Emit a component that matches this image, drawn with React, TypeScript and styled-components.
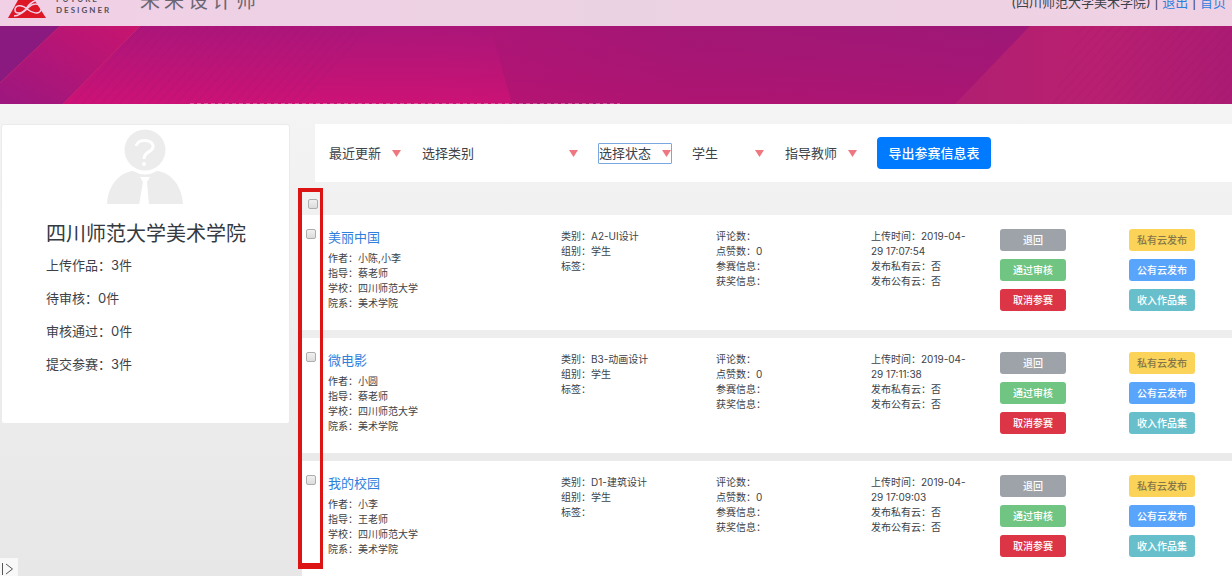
import React from "react";
import styled, { createGlobalStyle } from "styled-components";

const GlobalStyle = createGlobalStyle`
  *, *::before, *::after { box-sizing: border-box; }
  body {
    margin: 0;
    color: #3c4248;
    font-family: Inter, "Noto Sans CJK SC", sans-serif;
    font-size: 13px;
  }
  button, select, input { font: inherit; color: inherit; margin: 0; }
  h1, h2, h3, p, ul { margin: 0; padding: 0; font-weight: 400; }
  ul { list-style: none; }
`;

const Page = styled.div`
  min-height: 100vh;
  background: linear-gradient(#f4f4f4 100px, #e7e7e7 576px);
`;

const Header = styled.header`
  display: flex;
  align-items: flex-end;
  justify-content: space-between;
  height: 26px;
  padding: 0 6px 8px 8px;
  overflow: hidden;
  background: linear-gradient(90deg, #f1d0e6, #ebd2e2 50%, #f0d1e4);
`;

const Brand = styled.div`
  display: flex;
  align-items: flex-end;
`;

const BrandName = styled.div`
  width: 84px;
  margin-left: 10px;
  padding-bottom: 2px;
  color: #55505a;
  font-family: Lato, sans-serif;
  font-size: 8px;
  font-weight: 700;
  line-height: 11px;
  letter-spacing: 2px;
`;

const SiteTitle = styled.h1`
  padding-bottom: 5px;
  color: #6c6673;
  font-size: 20px;
  line-height: 24px;
  letter-spacing: 4px;
`;

const Account = styled.nav`
  padding-bottom: 6px;
  line-height: 20px;
  white-space: nowrap;
`;

const Link = styled.a`
  color: #2f80dd;
  text-decoration: none;
`;

const Banner = styled.svg`
  display: block;
  width: 100%;
  height: 78px;
`;

const Content = styled.div`
  display: grid;
  grid-template-columns: 289px minmax(0, 1fr);
  align-items: start;
  gap: 12px;
  padding: 20px 0 0 1px;
`;

const ProfileCard = styled.aside`
  display: flex;
  flex-direction: column;
  min-height: 300px;
  padding: 4px 44px 16px;
  background: #fff;
  border: 1px solid #ebebeb;
  border-radius: 3px;
`;

const Avatar = styled.svg`
  width: 78px;
  height: 76px;
  align-self: center;
`;

const ProfileName = styled.h2`
  margin: 15px 0 0;
  color: #343a40;
  font-size: 20px;
  line-height: 29px;
  white-space: nowrap;
`;

const Stat = styled.li`
  line-height: 33px;
`;

const Main = styled.main`
  position: relative;
`;

const FilterBar = styled.form`
  display: flex;
  align-items: center;
  gap: 19px;
  height: 58px;
  margin-left: 13px;
  padding-left: 13px;
  background: #fff;
`;

const SelectBox = styled.label<{ $wide?: boolean; $active?: boolean }>`
  display: flex;
  align-items: center;
  width: ${(p) => (p.$wide ? 158 : 74)}px;
  height: 21px;
  outline: ${(p) => (p.$active ? "1px solid #7ba7e0" : "none")};
  outline-offset: -1px;
  border-radius: 1px;
`;

const Select = styled.select`
  flex: 1;
  min-width: 0;
  height: 21px;
  padding: 0 0 0 1px;
  border: 0;
  outline: 0;
  background: none;
  appearance: none;
`;

const Arrow = styled.svg`
  flex: none;
  width: 9px;
  height: 7px;
  margin-right: 1px;
`;

const ExportButton = styled.button`
  width: 114px;
  height: 32px;
  padding: 0 0 2px;
  border: 0;
  border-radius: 4px;
  background: #007bff;
  color: #fff;
  font-weight: 500;
  white-space: nowrap;
`;

const SelectAll = styled.div`
  display: flex;
  align-items: center;
  height: 33px;
  padding: 11px 0 0 6px;
`;

const CheckBox = styled.input`
  display: block;
  width: 10px;
  height: 10px;
  border: 1px solid #adadad;
  border-radius: 2px;
  background: linear-gradient(#f0f0f0, #dcdcdc);
  appearance: none;
  &:checked { background: #5a8fd8; }
`;

const List = styled.ul`
  display: grid;
  gap: 8px;
`;

const Row = styled.li`
  display: grid;
  grid-template-columns: 26px 233fr 155fr 155fr 129fr 129fr 103fr;
  min-height: 115px;
  padding-top: 14px;
  background: #fff;
`;

const CheckCell = styled.div`
  padding-left: 4px;
`;

const WorkTitle = styled.h3`
  margin: -2px 0 4px;
  font-size: 13px;
  line-height: 20px;
`;

const Lines = styled.div`
  padding-right: 26px;
  font-size: 10px;
  line-height: 15px;
`;

const Actions = styled.div`
  display: flex;
  flex-direction: column;
  gap: 8px;
`;

const ActionButton = styled.button<{ $bg: string; $ink?: string }>`
  width: 66px;
  height: 22px;
  padding: 0;
  border: 0;
  border-radius: 3px;
  background: ${(p) => p.$bg};
  color: ${(p) => p.$ink ?? "#fff"};
  font-size: 10px;
  font-weight: 500;
  line-height: 22px;
`;

const Highlight = styled.div`
  position: absolute;
  top: 64px;
  bottom: 7px;
  left: -4px;
  width: 25px;
  border: solid #dd1414;
  border-width: 4px 3px 6px 4px;
  pointer-events: none;
`;

const PanelToggle = styled.button`
  position: fixed;
  bottom: 0;
  left: 0;
  display: flex;
  align-items: flex-end;
  width: 18px;
  height: 18px;
  padding: 0;
  border: 0;
  background: #f8f8f8;
`;

const filters = [
  { name: "排序", value: "最近更新" },
  { name: "类别", value: "选择类别", wide: true },
  { name: "状态", value: "选择状态", active: true },
  { name: "组别", value: "学生" },
  { name: "教师", value: "指导教师" },
];

const stats = ["上传作品：3件", "待审核：0件", "审核通过：0件", "提交参赛：3件"];

const works = [
  { title: "美丽中国", author: "小陈,小李", tutor: "蔡老师", category: "A2-UI设计", time: "2019-04-29 17:07:54" },
  { title: "微电影", author: "小圆", tutor: "蔡老师", category: "B3-动画设计", time: "2019-04-29 17:11:38" },
  { title: "我的校园", author: "小李", tutor: "王老师", category: "D1-建筑设计", time: "2019-04-29 17:09:03" },
];

function Logo() {
  return (
    <svg width="38" height="30" viewBox="0 0 38 30" aria-hidden="true">
      <path d="M0 30 L14 5 Q18 -1 22 5 L38 30 Z" fill="#dd1726" />
      <path
        d="M6 28 C12 28 17 23 21 19 C26 14 35 16 33 22 C31 27 24 25 19 21 C14 16 7 17 7 22 C7 26 13 26 17 22 C20 18 23 13 30 12"
        fill="none"
        stroke="#f1d0e6"
        strokeWidth="1.5"
      />
    </svg>
  );
}

function BannerArt() {
  return (
    <Banner viewBox="0 0 1232 78" preserveAspectRatio="none" aria-hidden="true">
      <defs>
        <linearGradient id="base">
          <stop offset="0" stopColor="#bd1379" />
          <stop offset="0.35" stopColor="#b91475" />
          <stop offset="0.55" stopColor="#a81672" />
          <stop offset="0.85" stopColor="#a01876" />
        </linearGradient>
        <linearGradient id="glow" x1="0" y1="0" x2="0" y2="1">
          <stop offset="0" stopColor="#a3177b" stopOpacity="0.6" />
          <stop offset="1" stopColor="#d51175" stopOpacity="0.7" />
        </linearGradient>
        <linearGradient id="soft" x1="0" y1="0" x2="0" y2="1">
          <stop offset="0" stopColor="#99187a" stopOpacity="0.3" />
          <stop offset="1" stopColor="#b61270" stopOpacity="0.5" />
        </linearGradient>
        <linearGradient id="band" x1="1" y1="0" x2="0" y2="1">
          <stop offset="0" stopColor="#c8146f" />
          <stop offset="1" stopColor="#9c177f" />
        </linearGradient>
        <linearGradient id="right">
          <stop offset="0" stopColor="#b01f72" />
          <stop offset="0.5" stopColor="#ba1f6f" />
          <stop offset="1" stopColor="#ab1b73" />
        </linearGradient>
        <pattern id="stripes" width="7" height="7" patternUnits="userSpaceOnUse" patternTransform="rotate(42)">
          <rect width="2" height="7" fill="#8c1078" opacity="0.1" />
        </pattern>
      </defs>
      <rect width="1232" height="78" fill="url(#base)" />
      <path d="M140 0 H490 L512 78 H63 Z" fill="url(#glow)" />
      <path d="M490 0 H1030 L955 78 H512 Z" fill="url(#soft)" />
      <path d="M140 0 H372 L305 78 H63 Z" fill="url(#stripes)" />
      <path d="M60 0 H140 L63 78 H0 V57 Z" fill="url(#band)" />
      <path d="M0 0 H60 L0 57 Z" fill="#8b1a80" />
      <path d="M1030 0 H1232 V78 H955 Z" fill="url(#right)" />
      <path d="M1080 0 H1232 V78 H1052 Z" fill="url(#stripes)" />
      <path d="M60 0 L0 57 M140 0 L63 78" stroke="#dc3560" strokeOpacity="0.45" />
      <path d="M190 77.500 H620" stroke="#f3b6dc" strokeOpacity="0.4" strokeDasharray="4 3" />
    </Banner>
  );
}

function WorkRow({ work }: { work: (typeof works)[number] }) {
  return (
    <Row>
      <CheckCell>
        <CheckBox type="checkbox" aria-label={work.title} />
      </CheckCell>
      <Lines>
        <WorkTitle>
          <Link href="#work">{work.title}</Link>
        </WorkTitle>
        <p>{`作者：${work.author}`}</p>
        <p>{`指导：${work.tutor}`}</p>
        <p>学校：四川师范大学</p>
        <p>院系：美术学院</p>
      </Lines>
      <Lines>
        <p>{`类别：${work.category}`}</p>
        <p>组别：学生</p>
        <p>标签：</p>
      </Lines>
      <Lines>
        <p>评论数：</p>
        <p>点赞数：0</p>
        <p>参赛信息：</p>
        <p>获奖信息：</p>
      </Lines>
      <Lines>
        <p>{`上传时间：${work.time}`}</p>
        <p>发布私有云：否</p>
        <p>发布公有云：否</p>
      </Lines>
      <Actions>
        <ActionButton type="button" $bg="#9da3a9">退回</ActionButton>
        <ActionButton type="button" $bg="#70c583">通过审核</ActionButton>
        <ActionButton type="button" $bg="#dc3545">取消参赛</ActionButton>
      </Actions>
      <Actions>
        <ActionButton type="button" $bg="#fad358" $ink="#85754a">私有云发布</ActionButton>
        <ActionButton type="button" $bg="#59a5fb">公有云发布</ActionButton>
        <ActionButton type="button" $bg="#68bfcc">收入作品集</ActionButton>
      </Actions>
    </Row>
  );
}

export default function App() {
  return (
    <Page>
      <GlobalStyle />
      <Header>
        <Brand>
          <Logo />
          <BrandName>
            FUTURE
            <br />
            DESIGNER
          </BrandName>
          <SiteTitle>未来设计师</SiteTitle>
        </Brand>
        <Account>
          (四川师范大学美术学院) | <Link href="#logout">退出</Link> | <Link href="#home">首页</Link>
        </Account>
      </Header>
      <BannerArt />
      <Content>
        <ProfileCard>
          <Avatar viewBox="0 0 78 76" aria-hidden="true">
            <circle cx="38" cy="21" r="20.500" fill="#ececec" />
            <path d="M0 75 C1 55 14 43 26 42 Q38 49 50 42 C62 43 75 55 76 75 Z" fill="#ececec" />
            <path d="M33 48 H43 L40 53 L42 76 H32 L36 53 Z" fill="#fff" />
            <path
              d="M29 17 C31 9 47 10 46 18 C45 24 37 22 37 30"
              fill="none"
              stroke="#fff"
              strokeWidth="3"
            />
            <circle cx="37" cy="35" r="2" fill="#fff" />
          </Avatar>
          <ProfileName>四川师范大学美术学院</ProfileName>
          <ul>
            {stats.map((s) => (
              <Stat key={s}>{s}</Stat>
            ))}
          </ul>
        </ProfileCard>
        <Main>
          <FilterBar>
            {filters.map((f) => (
              <SelectBox key={f.name} $wide={f.wide} $active={f.active}>
                <Select aria-label={f.name}>
                  <option>{f.value}</option>
                </Select>
                <Arrow viewBox="0 0 9 7" aria-hidden="true">
                  <path d="M0 0 H9 L4.500 7 Z" fill="#ee7780" />
                </Arrow>
              </SelectBox>
            ))}
            <ExportButton type="button">导出参赛信息表</ExportButton>
          </FilterBar>
          <SelectAll>
            <CheckBox type="checkbox" aria-label="全选" />
          </SelectAll>
          <List>
            {works.map((w) => (
              <WorkRow key={w.title} work={w} />
            ))}
          </List>
          <Highlight />
        </Main>
      </Content>
      <PanelToggle type="button" aria-label="展开侧栏">
        <svg width="14" height="14" viewBox="0 0 14 14" fill="none" stroke="#555" aria-hidden="true">
          <path d="M2.500 1 V13 M6 2 L12.500 7 L6 12" />
        </svg>
      </PanelToggle>
    </Page>
  );
}
